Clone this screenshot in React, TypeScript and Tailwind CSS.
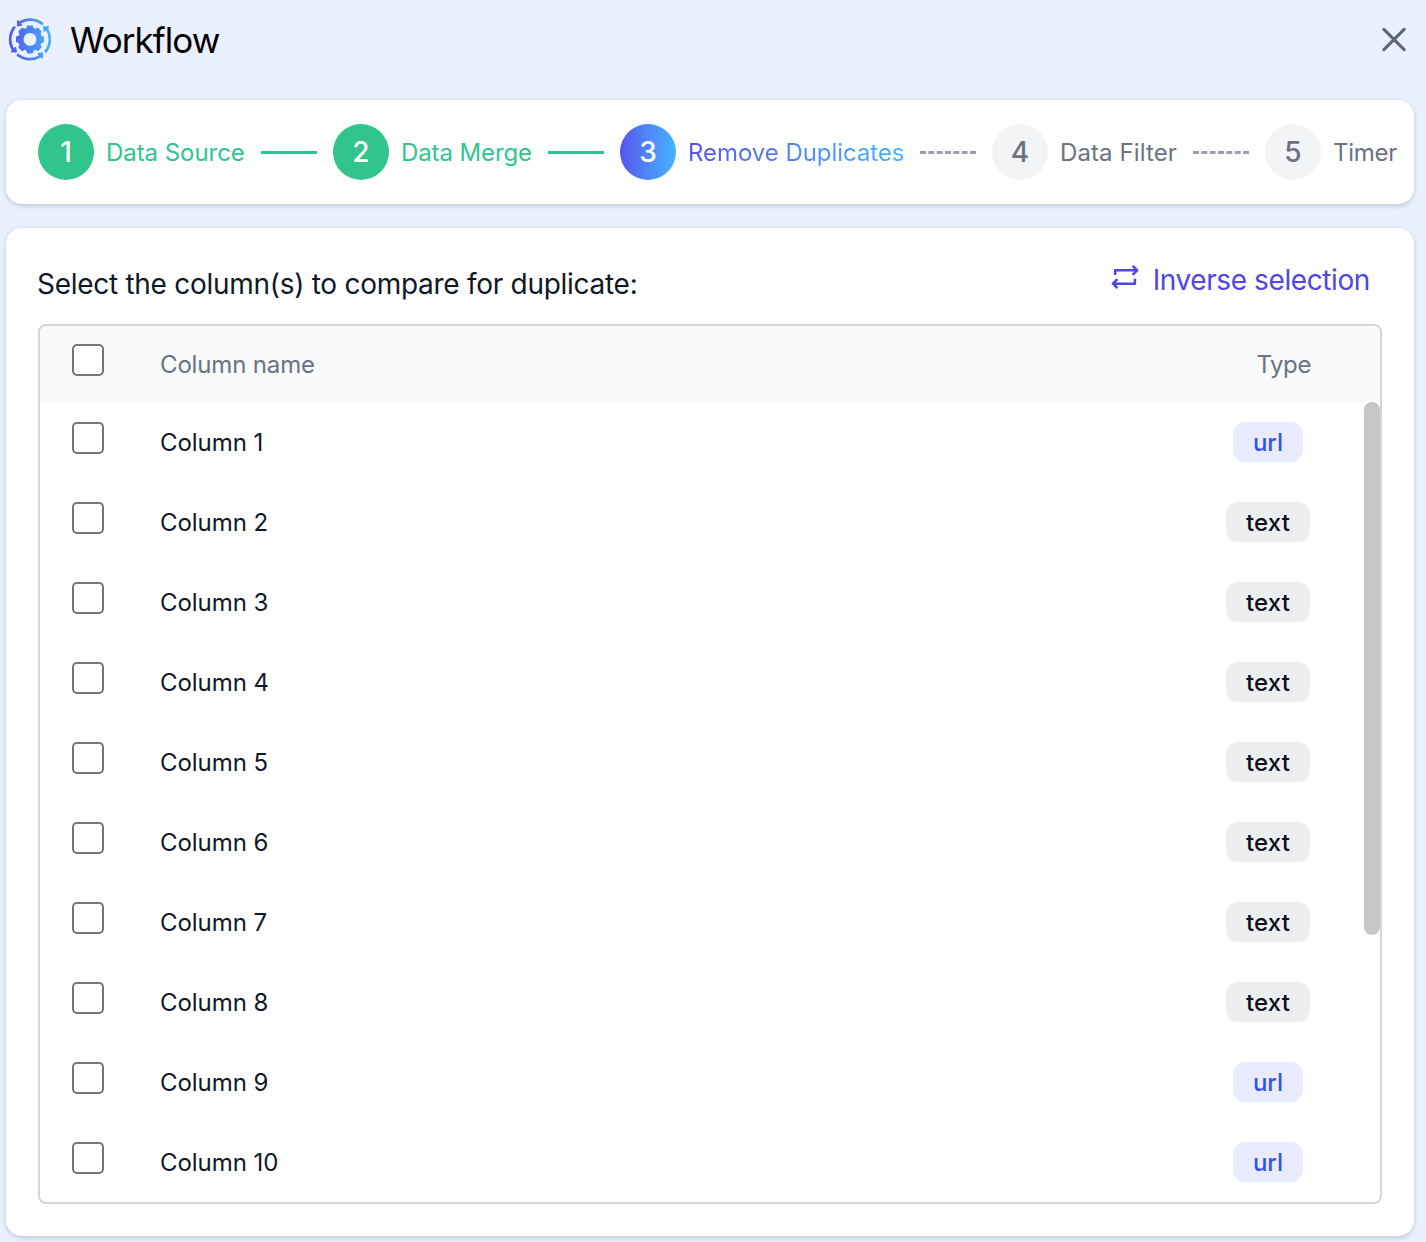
type StepState = "done" | "active" | "pending";

const steps: { label: string; state: StepState; box: string }[] = [
  { label: "Data Source", state: "done", box: "w-[139px] tracking-[-0.05px]" },
  { label: "Data Merge", state: "done", box: "w-[131px] tracking-[-0.1px]" },
  { label: "Remove Duplicates", state: "active", box: "w-[216px] tracking-[-0.05px]" },
  { label: "Data Filter", state: "pending", box: "w-[117px] tracking-[0.1px]" },
  { label: "Timer", state: "pending", box: "w-[66px] tracking-[-0.25px]" },
];

const circleStyle: Record<StepState, string> = {
  done: "bg-[#31c48d] text-white",
  active: "bg-linear-to-r from-[#5553ec] to-[#42b4ff] text-white",
  pending: "bg-gray-100 text-[#6b7280]",
};

const labelStyle: Record<StepState, string> = {
  done: "text-[#31c48d]",
  active: "bg-linear-to-r from-[#5553ec] to-[#42b4ff] bg-clip-text text-transparent",
  pending: "text-[#6b7280]",
};

const types = ["url", "text", "text", "text", "text", "text", "text", "text", "url", "url"];

function Logo() {
  return (
    <svg width="44" height="44" viewBox="-22 -21.4 44 44" className="shrink-0">
      <defs>
        <linearGradient id="logo" gradientUnits="userSpaceOnUse" x1="-21" y1="0" x2="21" y2="0">
          <stop offset="0" stopColor="#5553ec" />
          <stop offset="1" stopColor="#42b4ff" />
        </linearGradient>
        <mask id="shape" maskUnits="userSpaceOnUse" x="-22" y="-22" width="44" height="44">
          <circle r="9.1" fill="none" stroke="#fff" strokeWidth="5.4" />
          {[0, 45, 90, 135].map((a) => (
            <g key={a} transform={`rotate(${a})`} fill="#fff">
              <path d="M-3.8 -10.5L-2.9 -13.6Q-2.8 -14 -2.4 -14H2.4Q2.8 -14 2.9 -13.6L3.8 -10.5Z" />
              <path d="M-3.8 10.5L-2.9 13.6Q-2.8 14 -2.4 14H2.4Q2.8 14 2.9 13.6L3.8 10.5Z" />
            </g>
          ))}
          {[0, 90, 180, 270].map((a) => (
            <g key={a} transform={`rotate(${a})`}>
              <path d="M-10.5 -16.8A19.8 19.8 0 0 1 12 -15.75" fill="none" stroke="#fff" strokeWidth="2.7" strokeLinecap="round" />
              <path d="M-12.2 -18.2L-8.6 -14.6L-12.2 -13.9Z" fill="#fff" stroke="#fff" strokeWidth="1.8" strokeLinejoin="round" />
            </g>
          ))}
        </mask>
      </defs>
      <rect x="-22" y="-22" width="44" height="44" fill="url(#logo)" mask="url(#shape)" />
    </svg>
  );
}

function SwapIcon() {
  return (
    <svg width="28" height="26" viewBox="0 0 28 26" fill="none" stroke="currentColor" strokeWidth="2.5" strokeLinejoin="round">
      <path d="M4.2 11V6.3H26M21.6 1.8L26.2 6.3L21.6 10.8" />
      <path d="M23.9 14.7V19.7H2M6.5 15.2L1.9 19.7L6.5 24.2" />
    </svg>
  );
}

function Checkbox() {
  return (
    <input
      type="checkbox"
      className="block size-8 shrink-0 appearance-none rounded-[5px] border-2 border-[#767676] bg-white checked:bg-indigo-600"
    />
  );
}

function TypeBadge({ type }: { type: string }) {
  return (
    <span
      className={
        type === "url"
          ? "flex h-10 w-[70px] items-center justify-center rounded-xl bg-[#e9ebff] pt-0.5 font-medium text-[#2f54eb]"
          : "flex h-10 w-[84px] items-center justify-center rounded-xl bg-[#edeef0] pt-0.5 font-medium tracking-[0.15px] text-[#0f1020]"
      }
    >
      {type}
    </span>
  );
}

export default function App() {
  return (
    <div className="h-[1242px] w-[1426px] overflow-hidden bg-[#ebf0ff] px-1.5 font-['Inter',sans-serif] text-2xl text-gray-900">
      <header className="flex h-20 items-center justify-between pr-3.5 pl-0.5">
        <div className="flex items-center gap-[18px]">
          <Logo />
          <h1 className="text-[35px] leading-[44px] tracking-[-0.95px] text-black">Workflow</h1>
        </div>
        <button aria-label="Close" className="text-[#5f6673]">
          <svg width="24" height="24" viewBox="0 0 24 24" fill="none" stroke="currentColor" strokeWidth="3.1" strokeLinecap="round">
            <path d="M1.9 1.4L22.1 21.6M22.1 1.4L1.9 21.6" />
          </svg>
        </button>
      </header>

      <nav className="mt-5 flex h-[104px] w-[1408px] items-center rounded-2xl bg-white pl-8 shadow-[0_2px_6px_rgba(0,0,0,0.1),0_2px_4px_rgba(0,0,0,0.08)]">
        {steps.map((s, i) => (
          <div key={s.label} className="flex shrink-0 items-center">
            {i > 0 && (
              <div
                className={
                  s.state === "pending"
                    ? "mx-4 mt-px w-14 border-t-3 border-dashed border-gray-400"
                    : "mx-4 mt-px w-14 border-t-3 border-[#31c48d]"
                }
              />
            )}
            <div className={`flex size-14 items-center justify-center rounded-full pt-0.5 text-[28px] font-medium ${circleStyle[s.state]}`}>
              {i + 1}
            </div>
            <span className={`ml-3 pt-0.5 whitespace-nowrap ${s.box} ${labelStyle[s.state]}`}>{s.label}</span>
          </div>
        ))}
      </nav>

      <main className="mt-6 h-[1008px] w-[1408px] rounded-2xl bg-white px-8 pt-8 shadow-[0_2px_6px_rgba(0,0,0,0.1),0_2px_4px_rgba(0,0,0,0.08)]">
        <div className="flex h-16 items-start justify-between pr-3 text-[28px] leading-10">
          <h2 className="-ml-px pt-1 tracking-[-0.28px]">Select the column(s) to compare for duplicate:</h2>
          <button className="flex items-start text-[#4f46e5]">
            <span className="pt-1">
              <SwapIcon />
            </span>
            <span className="ml-3.5 tracking-[-0.4px]">Inverse selection</span>
          </button>
        </div>

        <section className="overflow-hidden rounded-lg border-2 border-gray-300">
          <div className="flex h-[76px] items-start bg-gray-50 pt-[18px] pr-[69px] pl-8 leading-[42px] text-gray-500">
            <Checkbox />
            <span className="ml-14 tracking-[-0.15px]">Column name</span>
            <span className="ml-auto tracking-[-0.4px]">Type</span>
          </div>
          <div className="flex h-[800px]">
            <div className="grow">
              {types.map((t, i) => (
                <div key={i} className="flex h-20 items-start pt-5 pl-8">
                  <Checkbox />
                  <span className="ml-14 leading-[42px] tracking-[-0.05px]">Column {i + 1}</span>
                  <div className="mr-[54px] ml-auto flex w-[84px] justify-center">
                    <TypeBadge type={t} />
                  </div>
                </div>
              ))}
            </div>
            <div className="h-[533px] w-4 rounded-full bg-[#c5c6c8]" />
          </div>
        </section>
      </main>
    </div>
  );
}
